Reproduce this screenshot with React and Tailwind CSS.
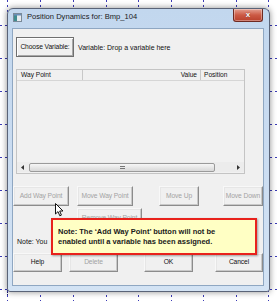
import React from "react";

const F = { fontFamily: '"Liberation Sans", Arial, sans-serif' };

function Btn({ w, h = 20, ml = 0, children, disabled, className = "" }) {
  return (
    <div
      className={`flex shrink-0 items-center justify-center whitespace-nowrap border border-t-[#f8f8f8] border-l-[#f8f8f8] border-r-[#8c8c8c] border-b-[#8c8c8c] shadow-[inset_-1px_-1px_0_#c9c9c9,inset_1px_1px_0_#e6e6e6] text-[6.7px] leading-none tracking-[-0.1px] ${disabled ? "text-[#a3a3a3]" : "text-[#111]"} ${className}`}
      style={{ width: w, height: h, marginLeft: ml }}
    >
      {children}
    </div>
  );
}

function Grid() {
  const xs = [7, 40, 73, 106, 138, 171, 203, 236, 268];
  const ys = [25, 58, 91, 124, 157, 190, 223, 256, 289];
  return (
    <svg className="absolute inset-0" width="277" height="301">
      {xs.map((x) => (
        <line key={"x" + x} x1={x + 0.5} y1="0" x2={x + 0.5} y2="301" stroke="#3b3bb5" strokeWidth="1" strokeDasharray="2 3" />
      ))}
      {ys.map((y) => (
        <line key={"y" + y} x1="0" y1={y + 0.5} x2="277" y2={y + 0.5} stroke="#3b3bb5" strokeWidth="1" strokeDasharray="2 3" />
      ))}
      <line x1="7.5" y1="20" x2="7.5" y2="295" stroke="#1c1c6a" strokeWidth="1" strokeDasharray="1 1" />
    </svg>
  );
}

export default function App() {
  return (
    <div className="relative h-[301px] w-[277px] overflow-hidden bg-white" style={F}>
      <Grid />
      <div className="relative ml-[7px] mt-[8px] flex h-[284px] w-[263px] flex-col rounded-t-[6px] rounded-b-[3px] border border-[#5a6478] bg-gradient-to-b from-[#c2d7ee] via-[#cadcf1] to-[#d3e3f4] shadow-[0_0_6px_rgba(0,0,0,0.45)]">
        {/* title bar */}
        <div className="flex h-[19px] shrink-0 items-start">
          <svg className="ml-[5px] mt-[4px] shrink-0" width="9" height="9" viewBox="0 0 9 9">
            <rect x="0.5" y="0.5" width="8" height="8" fill="#e8ecef" stroke="#7a8a99" />
            <rect x="1" y="1" width="3" height="7" fill="#3f8c8f" />
            <rect x="1" y="1" width="7" height="1.5" fill="#6b8fb8" />
          </svg>
          <div className="ml-[5px] mt-[4px] whitespace-nowrap text-[7.6px] leading-none text-[#1a1a1a]">Position Dynamics for: Bmp_104</div>
          <div className="ml-auto mr-[6px] flex h-[13px] w-[30px] items-center justify-center rounded-b-[3px] border border-t-0 border-[#6e2a22] bg-gradient-to-b from-[#e39f91] via-[#cc5a45] to-[#b8402c] shadow-[inset_0_0_0_1px_rgba(255,255,255,0.35)]">
            <span className="text-[8px] font-bold leading-none text-white" style={{ textShadow: "0 0 1px #5a1a10" }}>x</span>
          </div>
        </div>
        {/* client */}
        <div className="relative ml-[4px] flex h-[258px] w-[252px] flex-col border border-[#8fa7c2] bg-[#f0f0f0]">
          <div className="mt-[8px] flex items-center">
            <div className="ml-[3px] flex h-[20px] w-[58px] shrink-0 items-center justify-center whitespace-nowrap border border-[#6f6f6f] shadow-[inset_1px_1px_0_#fff,inset_-1px_-1px_0_#a8a8a8] text-[6.7px] leading-none tracking-[-0.1px] text-[#111]">
              Choose Variable:
            </div>
            <div className="ml-[4px] whitespace-nowrap text-[7px] leading-none text-[#111]">Variable: Drop a variable here</div>
          </div>
          {/* list */}
          <div className="ml-[3px] mt-[12px] flex h-[105px] w-[229px] flex-col border border-[#c4c4c4] bg-[#f1f1f1]">
            <div className="flex h-[11px] shrink-0 border-b border-[#d6d6d6] bg-[#f0f0f0] text-[6.6px] leading-none text-[#111]">
              <div className="flex w-[66px] items-center border-r border-[#c8c8c8] pl-[4px]">Way Point</div>
              <div className="flex w-[118px] items-center justify-end border-r border-[#c8c8c8] pr-[3px]">Value</div>
              <div className="flex flex-1 items-center pl-[3px]">Position</div>
            </div>
            <div className="flex-1" />
            <div className="mb-[1px] flex h-[10px] shrink-0 items-center bg-[#ececec]">
              <div className="flex w-[11px] justify-center">
                <svg width="3" height="5" viewBox="0 0 3 5"><path d="M3 0 L0 2.5 L3 5 Z" fill="#333" /></svg>
              </div>
              <div className="ml-[1px] flex h-[9px] w-[186px] items-center justify-center rounded-[2px] border border-[#9a9a9a] bg-gradient-to-b from-[#f6f6f6] to-[#d8d8d8]">
                <div className="flex h-[3px] w-[5px] flex-col justify-between">
                  <div className="h-px bg-[#777]" />
                  <div className="h-px bg-[#777]" />
                </div>
              </div>
              <div className="flex flex-1 justify-end pr-[4px]">
                <svg width="3" height="5" viewBox="0 0 3 5"><path d="M0 0 L3 2.5 L0 5 Z" fill="#333" /></svg>
              </div>
            </div>
          </div>
          {/* action buttons */}
          <div className="mt-[12px] flex">
            <Btn w={56} disabled ml={0}>Add Way Point</Btn>
            <Btn w={56} disabled ml={8}>Move Way Point</Btn>
            <Btn w={40} disabled ml={26}>Move Up</Btn>
            <Btn w={40} disabled ml={24}>Move Down</Btn>
          </div>
          <div className="mt-[2px] flex">
            <Btn w={65} disabled ml={64}>Remove Way Point</Btn>
          </div>
          <div className="ml-[4px] mt-[10px] whitespace-nowrap text-[7px] leading-none text-[#111]">Note: You</div>
          <div className="mt-[8px] flex">
            <Btn w={49} h={19} ml={0}>Help</Btn>
            <Btn w={49} h={19} ml={7} disabled>Delete</Btn>
            <Btn w={49} h={19} ml={26}>OK</Btn>
            <Btn w={48} h={19} ml={22}>Cancel</Btn>
          </div>

          {/* callout */}
          <div className="absolute left-[38px] top-[189px] flex h-[37px] w-[206px] flex-col justify-center border-2 border-[#e8221c] bg-[#ffffc4] pl-[5px] shadow-[1px_1px_2px_rgba(0,0,0,0.35)]">
            <div className="whitespace-nowrap text-[7.5px] font-bold leading-[10px] text-[#1a1a1a]">Note: The ‘Add Way Point’ button will not be</div>
            <div className="whitespace-nowrap text-[7.5px] font-bold leading-[10px] text-[#1a1a1a]">enabled until a variable has been assigned.</div>
          </div>

          {/* cursor */}
          <svg className="absolute left-[42px] top-[174px]" width="9" height="14" viewBox="0 0 9 14">
            <path d="M0.5 0.5 L0.5 11 L3 8.6 L4.8 12.8 L6.4 12.1 L4.7 8 L8 8 Z" fill="#fff" stroke="#111" strokeWidth="1" strokeLinejoin="round" />
          </svg>
        </div>
      </div>
    </div>
  );
}
